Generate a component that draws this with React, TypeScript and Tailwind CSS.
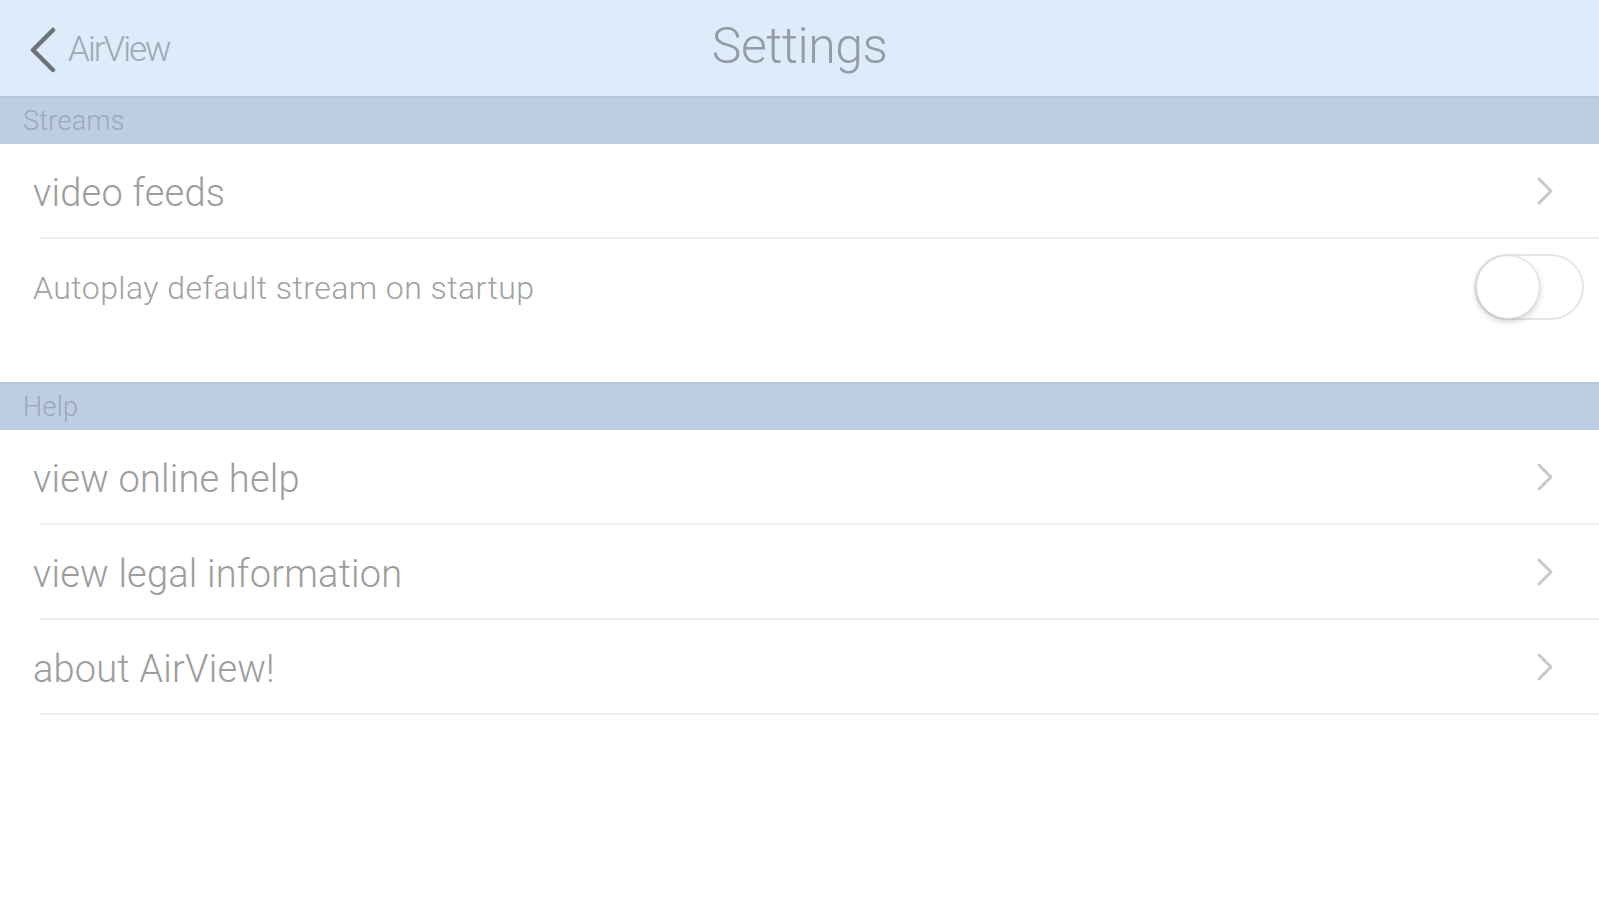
import React from "react";

const font = { fontFamily: "Roboto, 'Liberation Sans', sans-serif" };

function Chevron() {
  return (
    <svg width="18" height="30" viewBox="0 0 18 30" className="shrink-0">
      <path d="M3 3 L15 15 L3 27" fill="none" stroke="#c8c8cc" strokeWidth="3" strokeLinecap="round" strokeLinejoin="round" />
    </svg>
  );
}

function Section({ title }: { title: string }) {
  return (
    <div className="h-[48px] bg-[#bdcde3] border-t-2 border-[#b4c5dc] flex items-center pl-[23px]">
      <span className="text-[27px] font-light text-[#9ca8b8] tracking-[0.3px]">{title}</span>
    </div>
  );
}

function NavRow({ label }: { label: string }) {
  return (
    <div className="h-[95px] flex flex-col">
      <div className="flex-1 flex items-center justify-between pl-[33px] pr-[45px]">
        <span className="text-[38px] font-light text-[#9d9d9d] tracking-[0.2px] pt-[6px]">{label}</span>
        <Chevron />
      </div>
      <div className="ml-[40px] h-[2px] bg-[#eeeeee]" />
    </div>
  );
}

export default function App() {
  return (
    <div className="w-[1599px] h-[900px] bg-white overflow-hidden" style={font}>
      <div className="h-[96px] bg-[#deebfb] relative flex items-center">
        <div className="flex items-center pl-[28px] gap-[10px] pt-[4px]">
          <svg width="30" height="46" viewBox="0 0 30 46">
            <path d="M25 3 L5 23 L25 43" fill="none" stroke="#6e7378" strokeWidth="4.5" strokeLinecap="round" strokeLinejoin="round" />
          </svg>
          <span className="text-[35px] font-light text-[#a0a8b2] tracking-[-2px]">AirView</span>
        </div>
        <div className="absolute inset-0 flex items-center justify-center pb-[4px]">
          <span className="text-[50px] font-light text-[#949ba3] tracking-[-0.5px]">Settings</span>
        </div>
      </div>

      <Section title="Streams" />
      <NavRow label="video feeds" />
      <div className="h-[95px] flex items-center justify-between pl-[33px] pr-[15px]">
        <span className="text-[32px] font-light text-[#a2a2a2] tracking-[0.45px] pt-[3px]">Autoplay default stream on startup</span>
        <div className="w-[110px] h-[66px] rounded-full border-2 border-[#e6e6e6] bg-white flex items-center">
          <div className="w-[64px] h-[64px] rounded-full bg-white border border-[#dcdcdc] shadow-[0_3px_6px_rgba(0,0,0,0.18)]" />
        </div>
      </div>
      <div className="h-[48px]" />

      <Section title="Help" />
      <NavRow label="view online help" />
      <NavRow label="view legal information" />
      <NavRow label="about AirView!" />
    </div>
  );
}
